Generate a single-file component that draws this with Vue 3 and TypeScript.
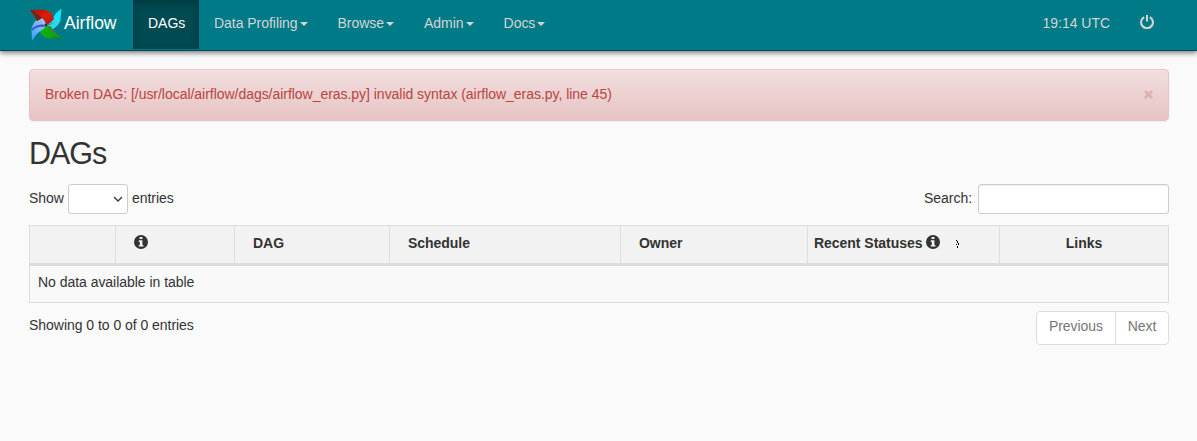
<script setup lang="ts">
interface NavItem {
  label: string
  menu: boolean
}

interface Column {
  key: string
  label: string
  info?: boolean
  cursor?: boolean
}

const navItems: NavItem[] = [
  { label: 'DAGs', menu: false },
  { label: 'Data Profiling', menu: true },
  { label: 'Browse', menu: true },
  { label: 'Admin', menu: true },
  { label: 'Docs', menu: true },
]

const columns: Column[] = [
  { key: 'toggle', label: '' },
  { key: 'info', label: '', info: true },
  { key: 'dag', label: 'DAG' },
  { key: 'schedule', label: 'Schedule' },
  { key: 'owner', label: 'Owner' },
  { key: 'recent', label: 'Recent Statuses', info: true, cursor: true },
  { key: 'links', label: 'Links' },
]
</script>

<template>
  <div class="page">
    <nav class="navbar">
      <a class="brand">
        <svg class="logo" viewBox="0 0 34 34" width="34" height="34">
          <defs>
            <linearGradient id="red" x1="0" y1="0" x2="1" y2="1">
              <stop offset="0" stop-color="#a01208" />
              <stop offset="0.5" stop-color="#dc1d0a" />
              <stop offset="1" stop-color="#b31a0b" />
            </linearGradient>
            <linearGradient id="blue" x1="0" y1="1" x2="0.700" y2="0">
              <stop offset="0" stop-color="#2fa0ff" />
              <stop offset="1" stop-color="#a3c0f4" />
            </linearGradient>
            <linearGradient id="green" x1="0" y1="0" x2="1" y2="1">
              <stop offset="0" stop-color="#11b511" />
              <stop offset="0.600" stop-color="#10a814" />
              <stop offset="1" stop-color="#067a10" />
            </linearGradient>
          </defs>
          <path d="M17 17 L24 10 Q27 4 32.500 0.500 L31.500 12 Q29 19 20 23Z" fill="#12e4fa" />
          <path d="M17 17 L31.500 12.500 Q29 19 20 23Z" fill="#35d4ea" />
          <path d="M17 17 L26 14.500 20 17Z" fill="#087f91" />
          <path d="M17 17 L21.500 19 Q26 26 34 31 L20 30.500 Q12 29 11 23 Q13 19 17 17Z" fill="url(#green)" />
          <path d="M17 17 L22 18.500 Q26 26 34 31 Q24 28 20 21Z" fill="#2e8e2a" />
          <path d="M2.500 21 Q5 11 12 9.500 Q16 11 17 17 L14.500 21 Q8 24 3 33Z" fill="url(#blue)" />
          <path d="M3 20.500 Q10 15 17 17 L14.500 19 Q8 18 3 23Z" fill="#3159cf" />
          <path d="M1 2 L15 1.500 Q23 3 25 11 Q21 16 17 17 Q17 13 13 10 L8 13 Q6 7 1 2Z" fill="url(#red)" />
          <path d="M1 2 Q9 6 13 10 L8 13 Q6 7 1 2Z" fill="#702219" />
          <circle cx="17" cy="17" r="1.300" fill="#1f3345" />
        </svg>
        <span class="brand-text">Airflow</span>
      </a>
      <ul class="nav">
        <li v-for="(item, i) in navItems" :key="item.label" class="nav-item" :class="{ active: i === 0 }">
          <span class="nav-label">{{ item.label }}</span><b v-if="item.menu" class="caret"></b>
        </li>
      </ul>
      <div class="nav-right">
        <span class="clock">19:14 UTC</span>
        <svg class="power" viewBox="0 0 14 14" width="14" height="14">
          <path d="M4.200 2.100 A5.900 5.900 0 1 0 9.800 2.100" fill="none" stroke="currentColor" stroke-width="2.100" />
          <path d="M7 0V6.600" stroke="currentColor" stroke-width="2" />
        </svg>
      </div>
    </nav>

    <main class="container">
      <div class="alert">
        <span class="alert-text">Broken DAG: [/usr/local/airflow/dags/airflow_eras.py] invalid syntax (airflow_eras.py, line 45)</span>
        <svg class="close" viewBox="0 0 9 9" width="9" height="9">
          <path d="M1 1 8 8M8 1 1 8" stroke="currentColor" stroke-width="2.600" />
        </svg>
      </div>

      <h2 class="title">DAGs</h2>

      <div class="controls">
        <div class="length">
          <span class="show">Show</span>
          <span class="select">
            <svg viewBox="0 0 10 6" width="10" height="6">
              <path d="M1 1 5 5 9 1" fill="none" stroke="#444" stroke-width="1.500" />
            </svg>
          </span>
          <span>entries</span>
        </div>
        <label class="search"><span class="search-label">Search:</span><input type="text" class="search-input" /></label>
      </div>

      <div class="table">
        <div class="row head">
          <div v-for="col in columns" :key="col.key" class="th" :class="col.key">
            <span v-if="col.label" class="th-label">{{ col.label }}</span>
            <svg v-if="col.info" class="info-icon" viewBox="0 0 14 14" width="14" height="14">
              <circle cx="7" cy="7" r="7" fill="#333" />
              <path d="M5.600 2H8.400V4H5.600ZM4.800 5.300H8.400V10H9.400V11.600H4.800V10H5.800V6.900H4.800Z" fill="#f2f2f2" />
            </svg>
            <svg v-if="col.cursor" class="spark" viewBox="0 0 3 9" width="3" height="9" shape-rendering="crispEdges">
              <path d="M0 0h1v1h-1zM1 1h1v2h-1zM2 3h1v2h-1zM0 4h1v1h-1zM1 6h1v2h-1z" fill="#000" />
            </svg>
          </div>
        </div>
        <div class="empty"><span>No data available in table</span></div>
      </div>

      <div class="footer">
        <span class="summary">Showing 0 to 0 of 0 entries</span>
        <div class="pager">
          <span class="page-btn prev">Previous</span>
          <span class="page-btn next">Next</span>
        </div>
      </div>
    </main>
  </div>
</template>

<style>
body {
  margin: 0;
  background: #fafafa;
}
</style>

<style scoped>
* {
  box-sizing: border-box;
}
.page {
  width: 1197px;
  height: 441px;
  overflow: hidden;
  background: #fafafa;
  color: #333;
  font: 14px/20px "Liberation Sans", Arial, sans-serif;
  letter-spacing: -0.035px;
}
.navbar {
  display: flex;
  height: 51px;
  padding: 0 43px 0 29px;
  background: #007a87;
  border-bottom: 1px solid #004a52;
  box-shadow: 0 2px 5px rgba(0, 0, 0, 0.5);
  color: #d4d4d4;
}
.brand {
  display: flex;
  width: 104px;
  color: #fff;
}
.logo {
  flex: none;
  margin-top: 8px;
}
.brand-text {
  margin: 13px 0 0 1px;
  font-size: 17.5px;
  line-height: 20px;
  letter-spacing: 0;
}
.nav {
  display: flex;
  height: 49px;
  margin: 0;
  padding: 0;
  list-style: none;
}
.nav-item {
  display: flex;
  padding: 13px 15px 0;
  white-space: nowrap;
}
.nav-item.active {
  width: 66px;
  background: #004a52;
  box-shadow: inset 0 3px 9px rgba(0, 0, 0, 0.25);
  color: #fff;
}
.caret {
  width: 8px;
  height: 4px;
  margin: 9px 0 0 2px;
  border-top: 4px solid currentColor;
  border-right: 4px solid transparent;
  border-left: 4px solid transparent;
}
.nav-right {
  display: flex;
  margin-left: auto;
}
.clock {
  margin: 13px 30px 0 0;
}
.power {
  margin-top: 15px;
}
.container {
  padding: 18px 28px 0 29px;
}
.alert {
  display: flex;
  justify-content: space-between;
  height: 52px;
  padding: 14px 15px 0;
  border: 1px solid #e6c3c8;
  border-radius: 4px;
  background: linear-gradient(#f2dede, #e7c3c3);
  box-shadow: inset 0 1px 0 rgba(255, 255, 255, 0.25), 0 1px 2px rgba(0, 0, 0, 0.05);
  color: #b94442;
}
.close {
  margin-top: 6px;
  color: #dcb0b0;
}
.title {
  height: 33px;
  margin: 16px 0 14px;
  font-size: 30.5px;
  font-weight: 400;
  line-height: 33px;
  letter-spacing: -1px;
}
.controls {
  display: flex;
  justify-content: space-between;
  height: 30px;
}
.length,
.search {
  display: flex;
  line-height: 28px;
}
.show {
  width: 39px;
}
.select {
  display: flex;
  align-items: center;
  justify-content: flex-end;
  width: 60px;
  height: 30px;
  margin-right: 4px;
  padding-right: 4px;
  border: 1px solid #ccc;
  border-radius: 3px;
  background: #fff;
}
.search-label {
  margin-right: 6px;
}
.search-input {
  width: 191px;
  height: 30px;
  border: 1px solid #ccc;
  border-radius: 3px;
  background: #fff;
  box-shadow: inset 0 1px 1px rgba(0, 0, 0, 0.075);
}
.table {
  margin-top: 11px;
  border: 1px solid #ddd;
}
.row {
  display: grid;
  grid-template-columns: 86px 119px 155px 231px 187px 192px 1fr;
  height: 40px;
  border-bottom: 3px solid #ddd;
  background: #f2f2f2;
  font-weight: 700;
}
.th {
  display: flex;
  padding: 7px 0 0 18px;
  border-right: 1px solid #ddd;
  white-space: nowrap;
}
.th:last-child {
  border-right: 0;
}
.th.recent {
  padding-left: 6px;
}
.th.links {
  justify-content: center;
  padding-left: 0;
}
.info-icon {
  margin-top: 2px;
}
.recent .info-icon {
  margin-left: 4px;
}
.spark {
  margin: 7px 0 0 16px;
}
.empty {
  height: 36px;
  padding: 6px 8px 0;
  background: #f9f9f9;
}
.footer {
  display: flex;
  justify-content: space-between;
  margin-top: 8px;
}
.summary {
  margin-top: 4px;
}
.pager {
  display: flex;
  height: 34px;
  border: 1px solid #ddd;
  border-radius: 4px;
  background: #fff;
  color: #777;
}
.page-btn {
  padding-top: 4px;
  text-align: center;
}
.prev {
  width: 79px;
  border-right: 1px solid #ddd;
}
.next {
  width: 52px;
}
</style>
